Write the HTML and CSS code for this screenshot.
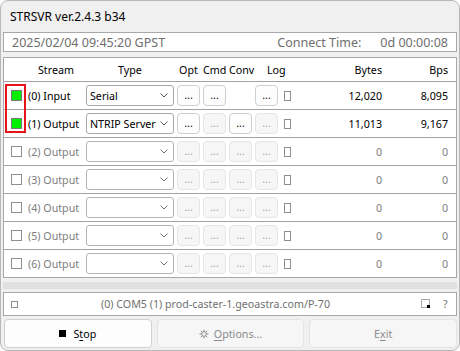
FILE: index.html
```html
<!DOCTYPE html>
<html>
<head>
<meta charset="utf-8">
<link rel="stylesheet" href="styles.css">
</head>
<body>
<div class="window">
  <div class="titlebar">STRSVR ver.2.4.3 b34</div>
  <div class="timebar">
    <span class="time">2025/02/04 09:45:20 GPST</span>
    <span class="conn-label">Connect Time:</span>
    <span class="conn-val">0d 00:00:08</span>
  </div>
  <div class="table">
    <div class="hl"></div>
    <div class="row head">
      <div class="h-stream">Stream</div>
      <div class="h-type">Type</div>
      <div class="h-btn">Opt</div>
      <div class="h-btn">Cmd</div>
      <div class="h-btn">Conv</div>
      <div class="h-log">Log</div>
      <div class="num">Bytes</div>
      <div class="num">Bps</div>
    </div>
    <div class="row">
      <div class="stream"><span class="cb on"></span><span class="lbl">(0) Input</span></div>
      <div class="combo"><span>Serial</span><svg class="chev" width="8" height="5" viewBox="0 0 8 5"><polyline points="0.5,0.5 4,4 7.5,0.5"/></svg></div>
      <div class="bcell"><span class="dots">...</span></div>
      <div class="bcell"><span class="dots">...</span></div>
      <div class="bcell"></div>
      <div class="bcell"><span class="dots">...</span></div>
      <div class="icell"><span class="ind"></span></div>
      <div class="num">12,020</div>
      <div class="num">8,095</div>
    </div>
    <div class="row">
      <div class="stream"><span class="cb on"></span><span class="lbl">(1) Output</span></div>
      <div class="combo"><span>NTRIP Server</span><svg class="chev" width="8" height="5" viewBox="0 0 8 5"><polyline points="0.5,0.5 4,4 7.5,0.5"/></svg></div>
      <div class="bcell"><span class="dots">...</span></div>
      <div class="bcell"><span class="dots off">...</span></div>
      <div class="bcell"><span class="dots">...</span></div>
      <div class="bcell"><span class="dots off">...</span></div>
      <div class="icell"><span class="ind"></span></div>
      <div class="num">11,013</div>
      <div class="num">9,167</div>
    </div>
    <div class="row dis">
      <div class="stream"><span class="cb"></span><span class="lbl">(2) Output</span></div>
      <div class="combo"><span></span><svg class="chev" width="8" height="5" viewBox="0 0 8 5"><polyline points="0.5,0.5 4,4 7.5,0.5"/></svg></div>
      <div class="bcell"><span class="dots off">...</span></div>
      <div class="bcell"><span class="dots off">...</span></div>
      <div class="bcell"><span class="dots off">...</span></div>
      <div class="bcell"><span class="dots off">...</span></div>
      <div class="icell"><span class="ind"></span></div>
      <div class="num">0</div>
      <div class="num">0</div>
    </div>
    <div class="row dis">
      <div class="stream"><span class="cb"></span><span class="lbl">(3) Output</span></div>
      <div class="combo"><span></span><svg class="chev" width="8" height="5" viewBox="0 0 8 5"><polyline points="0.5,0.5 4,4 7.5,0.5"/></svg></div>
      <div class="bcell"><span class="dots off">...</span></div>
      <div class="bcell"><span class="dots off">...</span></div>
      <div class="bcell"><span class="dots off">...</span></div>
      <div class="bcell"><span class="dots off">...</span></div>
      <div class="icell"><span class="ind"></span></div>
      <div class="num">0</div>
      <div class="num">0</div>
    </div>
    <div class="row dis">
      <div class="stream"><span class="cb"></span><span class="lbl">(4) Output</span></div>
      <div class="combo"><span></span><svg class="chev" width="8" height="5" viewBox="0 0 8 5"><polyline points="0.5,0.5 4,4 7.5,0.5"/></svg></div>
      <div class="bcell"><span class="dots off">...</span></div>
      <div class="bcell"><span class="dots off">...</span></div>
      <div class="bcell"><span class="dots off">...</span></div>
      <div class="bcell"><span class="dots off">...</span></div>
      <div class="icell"><span class="ind"></span></div>
      <div class="num">0</div>
      <div class="num">0</div>
    </div>
    <div class="row dis">
      <div class="stream"><span class="cb"></span><span class="lbl">(5) Output</span></div>
      <div class="combo"><span></span><svg class="chev" width="8" height="5" viewBox="0 0 8 5"><polyline points="0.5,0.5 4,4 7.5,0.5"/></svg></div>
      <div class="bcell"><span class="dots off">...</span></div>
      <div class="bcell"><span class="dots off">...</span></div>
      <div class="bcell"><span class="dots off">...</span></div>
      <div class="bcell"><span class="dots off">...</span></div>
      <div class="icell"><span class="ind"></span></div>
      <div class="num">0</div>
      <div class="num">0</div>
    </div>
    <div class="row dis">
      <div class="stream"><span class="cb"></span><span class="lbl">(6) Output</span></div>
      <div class="combo"><span></span><svg class="chev" width="8" height="5" viewBox="0 0 8 5"><polyline points="0.5,0.5 4,4 7.5,0.5"/></svg></div>
      <div class="bcell"><span class="dots off">...</span></div>
      <div class="bcell"><span class="dots off">...</span></div>
      <div class="bcell"><span class="dots off">...</span></div>
      <div class="bcell"><span class="dots off">...</span></div>
      <div class="icell"><span class="ind"></span></div>
      <div class="num">0</div>
      <div class="num">0</div>
    </div>
  </div>
  <div class="strip"></div>
  <div class="status">
    <span class="sq"></span>
    <span class="msg">(0) COM5 (1) prod-caster-1.geoastra.com/P-70</span>
    <svg class="dotted" width="10" height="10" viewBox="0 0 10 10"><rect x="0.5" y="0.5" width="8" height="8" fill="none" stroke="#555" stroke-width="1" stroke-dasharray="1 1"/><rect x="6" y="6" width="3" height="3" fill="#000"/></svg>
    <span class="help">?</span>
  </div>
  <div class="buttons">
    <div class="btn"><span class="stopsq"></span>S<u>t</u>op</div>
    <div class="btn off"><svg class="gear" width="10" height="10" viewBox="0 0 10 10"><circle cx="5" cy="5" r="2.3" fill="none" stroke="#8a8a8a" stroke-width="1"/><path d="M5 0.5V2.5M5 7.5V9.5M0.5 5H2.5M7.5 5H9.5M1.8 1.8L3.2 3.2M6.8 6.8L8.2 8.2M8.2 1.8L6.8 3.2M3.2 6.8L1.8 8.2" stroke="#8a8a8a" stroke-width="1"/></svg><u>O</u>ptions...</div>
    <div class="btn off">E<u>x</u>it</div>
  </div>
</div>
</body>
</html>
```

FILE: styles.css
```css
* { box-sizing: border-box; margin: 0; padding: 0; }
html, body { width: 460px; height: 351px; background: #ffffff; overflow: hidden; }
body { font-family: "Noto Sans", "Open Sans", sans-serif; font-size: 10.7px; color: #000; }

.window {
  width: 460px; height: 351px;
  border: 1px solid #b8b8b8; border-radius: 8px;
  background: #f0f0f0;
  display: flex; flex-direction: column;
  overflow: hidden;
}

.titlebar {
  height: 31px; padding-left: 9px;
  display: flex; align-items: center;
  font-size: 12px; color: #000;
}

.timebar {
  height: 20px; margin: 0 2px;
  border: 1px solid #a8a8a8; background: #fff;
  display: flex; align-items: center;
  padding: 1px 8px 0 8px;
  color: #6e6e6e; font-size: 12.5px;
}
.time { flex: 1; }
.conn-label { margin-right: 19px; }

.table {
  margin: 5px 2px 0;
  border: 1px solid #a8a8a8; background: #fff;
  position: relative;
}
.hl {
  position: absolute; left: 1px; top: 26px;
  width: 21px; height: 49px;
  border: 2px solid #e8141b;
}
.row {
  display: grid;
  grid-template-columns: 82px 88px 26px 26px 26px 26px 13px 1fr 66px;
  padding-right: 8px;
  height: 28px;
  border-bottom: 1px solid #a3a3a3;
  align-items: center;
  white-space: nowrap;
}
.row:last-child { border-bottom: none; height: 27px; }
.row.head { height: 24px; }
.h-stream { padding-left: 34px; }
.h-type { text-align: center; }
.h-btn { text-align: center; padding-left: 3px; }
.h-log { grid-column: span 2; padding-left: 15px; }
.num { text-align: right; }

.stream { display: flex; align-items: center; padding-left: 7px; }
.cb { width: 11px; height: 11px; border: 1px solid #8e8e8e; background: #fff; }
.cb.on { background: #00f000; border-color: #7a7a7a; }
.lbl { margin-left: 6px; }

.combo {
  height: 21px;
  border: 1px solid #a8a8a8; border-radius: 3px; background: #fff;
  display: flex; align-items: center; justify-content: space-between;
  padding: 0 5px 0 3px;
}
.chev { fill: none; stroke: #555; stroke-width: 1; }

.bcell { display: flex; padding-left: 3px; }
.dots {
  width: 23px; height: 21px;
  border: 1px solid #cfcfcf; border-radius: 4px; background: #fdfdfd;
  display: flex; align-items: center; justify-content: center;
  color: #111; padding-bottom: 2px;
}
.dots.off { border-color: #e6e6e6; background: #f6f6f6; color: #a8a8a8; }
.icell { display: flex; padding-left: 6px; }
.ind { width: 7px; height: 10px; border: 1px solid #8e8e8e; }

.row.dis .lbl, .row.dis .num { color: #7e7e7e; }
.row.dis .combo { border-color: #b4b4b4; }
.row.dis .chev { stroke: #707070; }

.strip { margin: 4px 2px 0; height: 7px; background: #e1e1e1; }

.status {
  margin: 3px 2px 0; height: 24px;
  border: 1px solid #a8a8a8; background: #fff;
  display: flex; align-items: center;
  padding: 0 7px 0 7px;
  color: #707070;
}
.sq { width: 7px; height: 7px; border: 1px solid #8e8e8e; }
.msg { flex: 1; text-align: center; padding-right: 8px; }
.dotted { margin-right: 12px; }
.help { width: 6px; }

.buttons {
  margin: 3px 2px 0 3px; height: 29px;
  display: flex; gap: 5px;
}
.btn {
  flex: 1;
  border: 1px solid #d0d0d0; border-radius: 4px; background: #fdfdfd;
  display: flex; align-items: center; justify-content: center;
  color: #000;
}
.btn.off { border-color: #e4e4e4; background: #f6f6f6; color: #8a8a8a; }
.stopsq { width: 7px; height: 7px; background: #000; margin-right: 7px; }
.gear { margin-right: 5px; }
u { text-decoration-thickness: 1px; text-underline-offset: 2px; }
```
